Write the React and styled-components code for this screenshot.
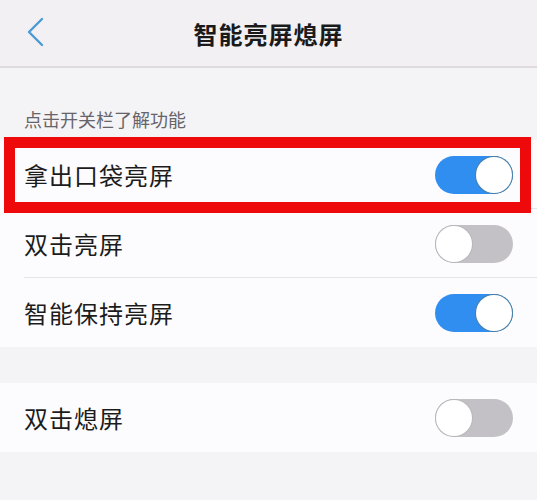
import styled, { createGlobalStyle } from "styled-components"

const GlobalStyle = createGlobalStyle`
    html, body {
        margin: 0;
        padding: 0;
        background: #f4f3f6;
    }
    body {
        font-family: "Noto Sans CJK SC", "Noto Sans", sans-serif;
    }
`

const Page = styled.div`
    width: 537px;
    height: 500px;
    background: #f4f3f6;
    overflow: hidden;
`

const Header = styled.div`
    height: 66px;
    display: flex;
    align-items: center;
    justify-content: center;
    position: relative;
    background: #f2f0f3;
    border-bottom: 2px solid #dedadf;
`

const BackButton = styled.div`
    position: absolute;
    left: 26px;
    top: 17px;
    width: 22px;
    height: 30px;
    display: flex;
    align-items: center;
`

const Title = styled.h1`
    margin: 0;
    font-size: 24px;
    font-weight: 700;
    color: #1a1a1a;
    letter-spacing: 1px;
`

const SectionLabel = styled.div`
    height: 72px;
    display: flex;
    align-items: flex-end;
    padding: 0 24px 8px;
    box-sizing: border-box;
    font-size: 18px;
    color: #666468;
`

const Group = styled.div`
    background: #fcfbfe;
    margin-bottom: ${(p) => p.$gap || 0}px;
`

const Row = styled.div`
    position: relative;
    height: 69px;
    display: flex;
    align-items: center;
    justify-content: space-between;
    padding: 0 24px;
    box-sizing: border-box;
    &:not(:last-child)::after {
        content: "";
        position: absolute;
        left: 24px;
        right: 0;
        bottom: 0;
        height: 1px;
        background: #e6e4e8;
    }
`

const Label = styled.span`
    font-size: 24px;
    color: #1c1c1c;
    letter-spacing: 1px;
`

const Highlight = styled.div`
    position: absolute;
    left: 4px;
    right: 6px;
    top: -3px;
    bottom: -4px;
    border: 11px solid #ee0a0a;
    z-index: 2;
    pointer-events: none;
`

const Track = styled.div`
    position: relative;
    width: 78px;
    height: 38px;
    border-radius: 19px;
    background: ${(p) => (p.$on ? "#2f8ef0" : "#c3c1c6")};
    flex-shrink: 0;
`

const Knob = styled.div`
    position: absolute;
    top: 1px;
    left: ${(p) => (p.$on ? "41px" : "1px")};
    width: 36px;
    height: 36px;
    border-radius: 50%;
    background: #ffffff;
    box-shadow: 0 0 0 1px ${(p) => (p.$on ? "#4d7fa0" : "#b8b6bb")};
`

const Toggle = ({ on }) => (
    <Track $on={on}>
        <Knob $on={on} />
    </Track>
)

const SettingRow = ({ label, on, highlight }) => (
    <Row>
        {highlight && <Highlight />}
        <Label>{label}</Label>
        <Toggle on={on} />
    </Row>
)

export default function App() {
    return (
        <Page>
            <GlobalStyle />
            <Header>
                <BackButton>
                    <svg width="18" height="30" viewBox="0 0 18 30">
                        <path d="M16 2 L3 15 L16 28" fill="none" stroke="#4a9ad4" strokeWidth="2.4" strokeLinecap="round" strokeLinejoin="round" />
                    </svg>
                </BackButton>
                <Title>智能亮屏熄屏</Title>
            </Header>
            <SectionLabel>点击开关栏了解功能</SectionLabel>
            <Group $gap={36}>
                <SettingRow label="拿出口袋亮屏" on highlight />
                <SettingRow label="双击亮屏" on={false} />
                <SettingRow label="智能保持亮屏" on />
            </Group>
            <Group>
                <SettingRow label="双击熄屏" on={false} />
            </Group>
        </Page>
    )
}
